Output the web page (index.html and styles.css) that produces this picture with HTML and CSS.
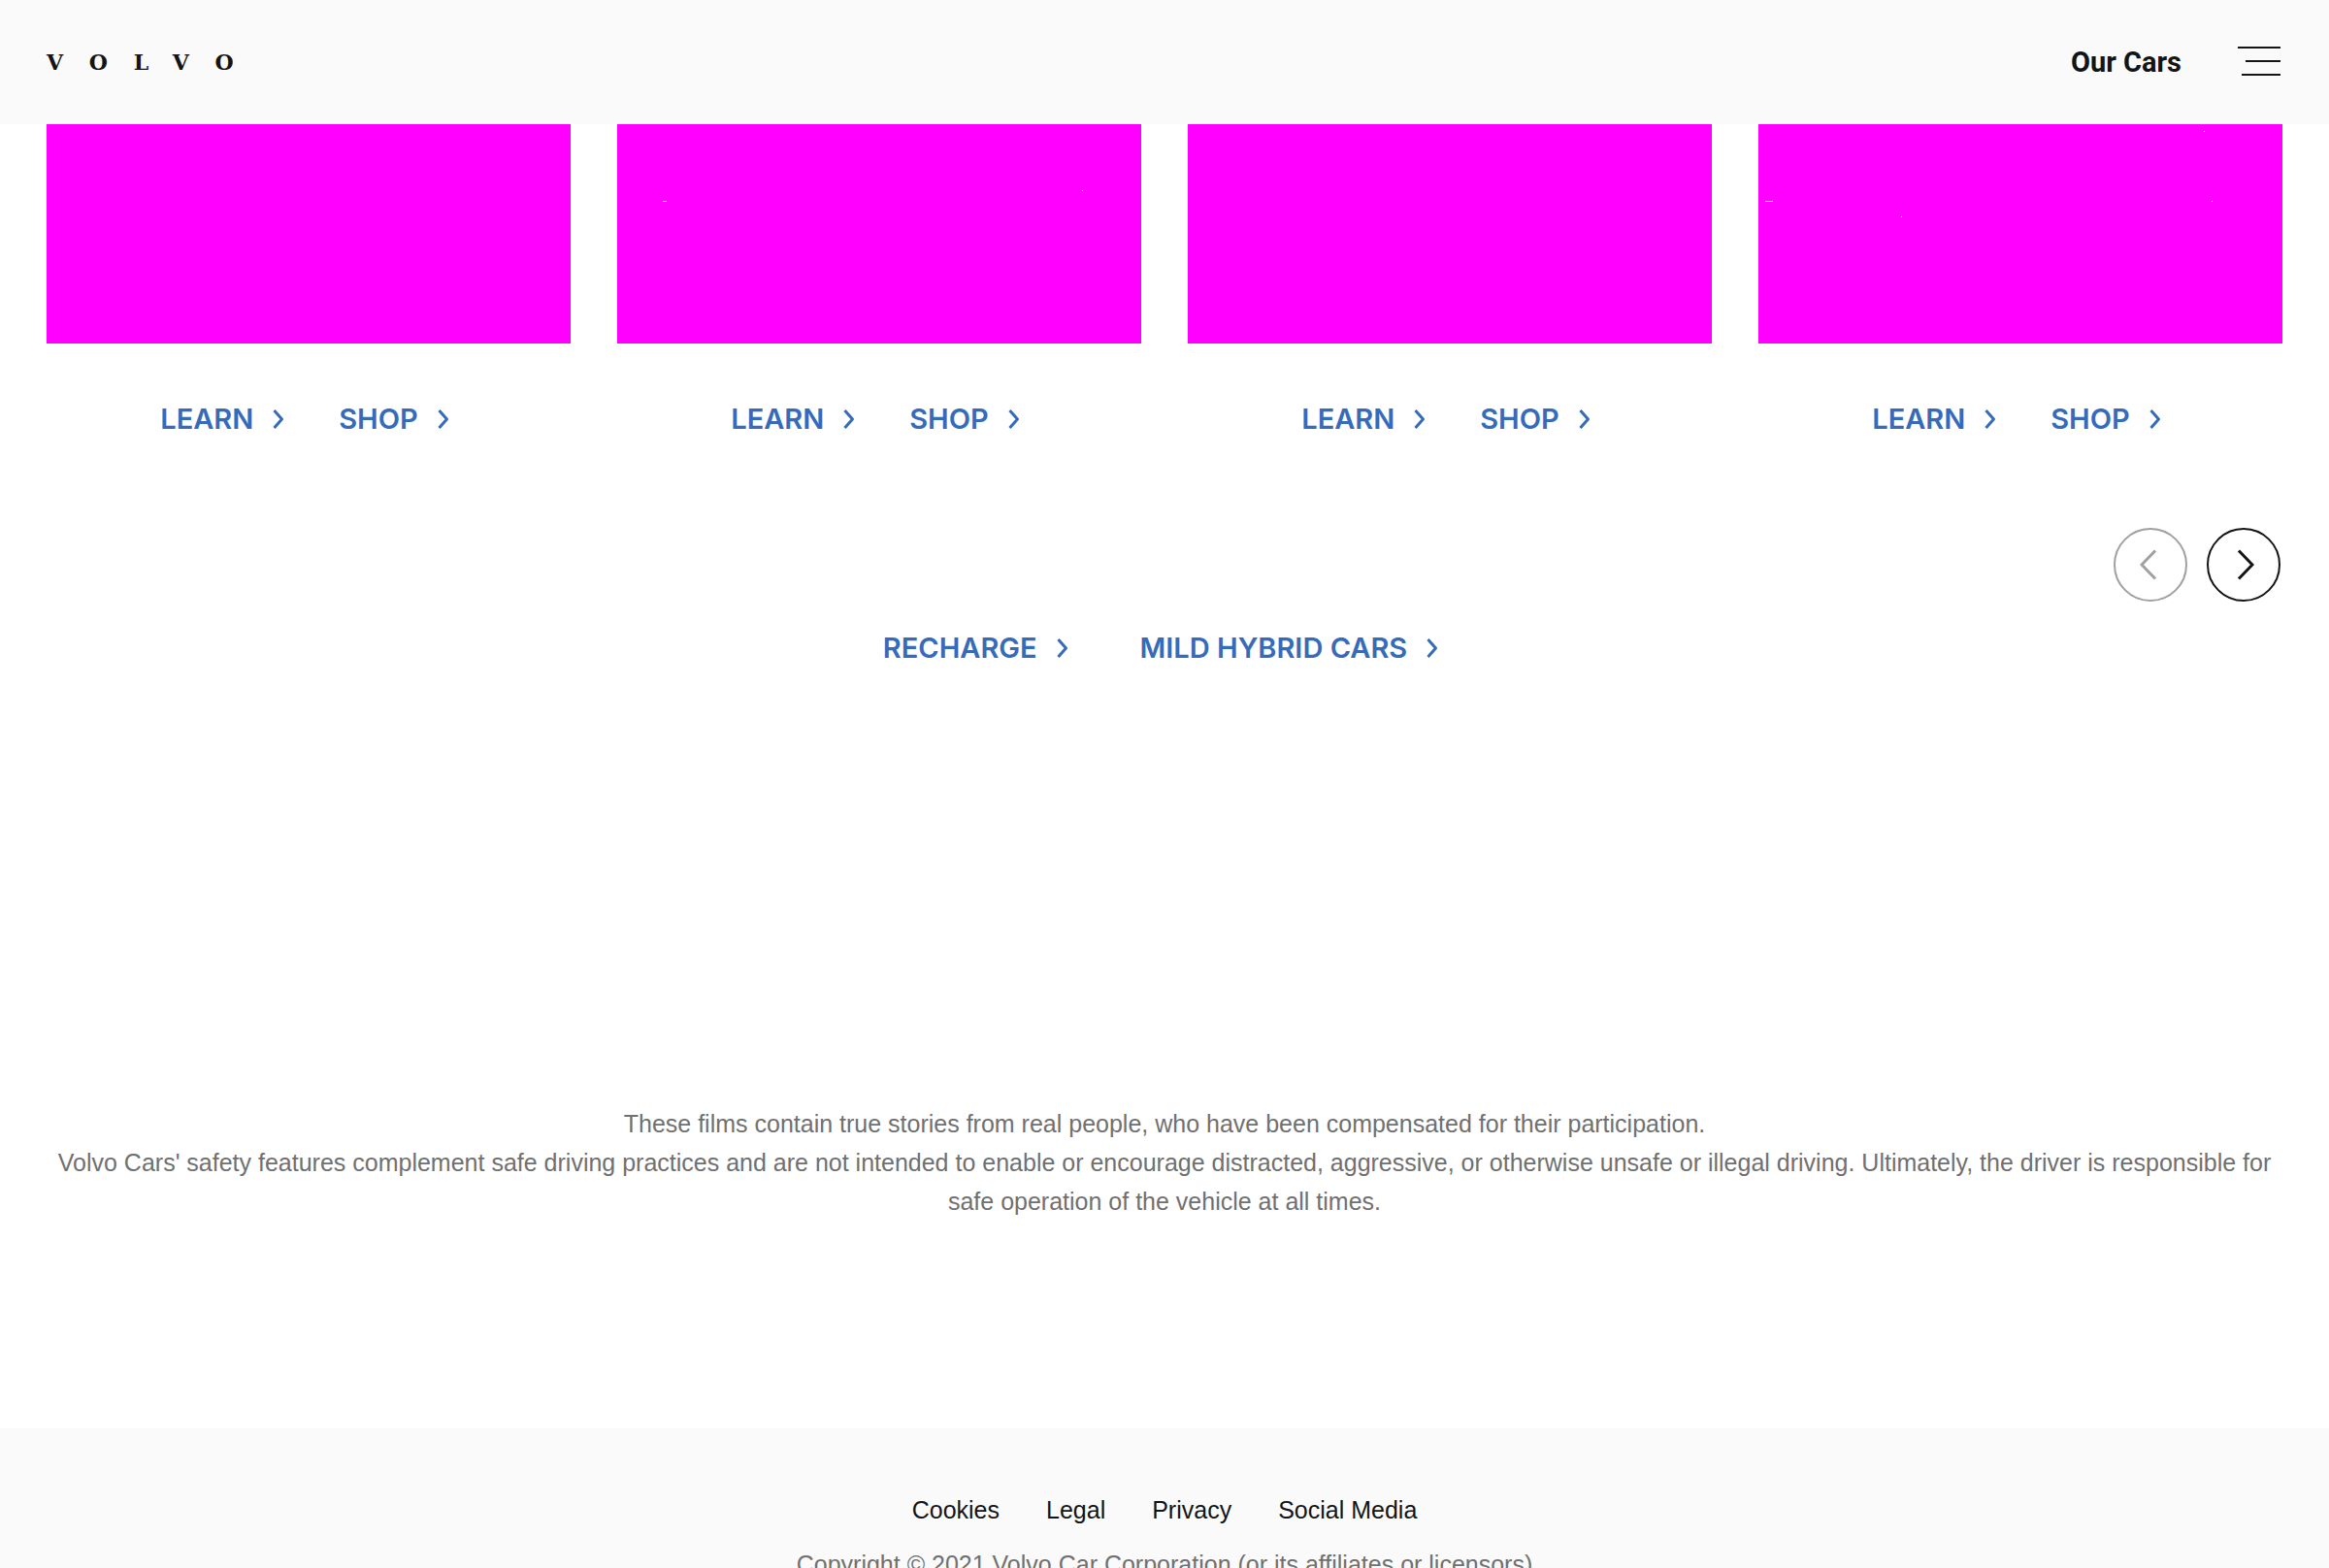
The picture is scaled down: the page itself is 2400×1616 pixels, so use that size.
FILE: index.html
```html
<!DOCTYPE html>
<html lang="en">
<head>
<meta charset="utf-8">
<meta name="viewport" content="width=device-width, initial-scale=1">
<title>Volvo Cars</title>
<link rel="stylesheet" href="styles.css">
</head>
<body>
<svg class="sprite" aria-hidden="true">
  <symbol id="chevron" viewBox="0 0 20 20"><path d="M1.500 1 9.500 10l-8 9" fill="none" stroke="currentColor" stroke-width="3" stroke-linejoin="round"/></symbol>
</svg>

<header class="header">
  <a class="logo" href="#" aria-label="Volvo">VOLVO</a>
  <nav class="header-nav" aria-label="Main">
    <button class="cars-button" type="button">Our Cars</button>
    <button class="menu-button" type="button" aria-label="Menu">
      <svg width="44" height="32" viewBox="0 0 44 32" aria-hidden="true"><path d="M0 1h44M8 15h36M4 29h40" stroke="#141414" stroke-width="2"/></svg>
    </button>
  </nav>
</header>

<main>
  <section class="cars" aria-label="Our cars">
    <article class="car">
      <div class="car-image"></div>
      <div class="links">
        <a class="link" href="#">LEARN<svg class="chevron"><use href="#chevron"/></svg></a>
        <a class="link" href="#">SHOP<svg class="chevron"><use href="#chevron"/></svg></a>
      </div>
    </article>
    <article class="car">
      <div class="car-image"><svg class="specks" aria-hidden="true"><path d="M47 79.500h4M479 68.500h1" stroke="#fff"/></svg></div>
      <div class="links">
        <a class="link" href="#">LEARN<svg class="chevron"><use href="#chevron"/></svg></a>
        <a class="link" href="#">SHOP<svg class="chevron"><use href="#chevron"/></svg></a>
      </div>
    </article>
    <article class="car">
      <div class="car-image"></div>
      <div class="links">
        <a class="link" href="#">LEARN<svg class="chevron"><use href="#chevron"/></svg></a>
        <a class="link" href="#">SHOP<svg class="chevron"><use href="#chevron"/></svg></a>
      </div>
    </article>
    <article class="car">
      <div class="car-image"><svg class="specks" aria-hidden="true"><path d="M7 79.500h8M147 95.500h1M459 7.500h1M467 79.500h1" stroke="#fff"/></svg></div>
      <div class="links">
        <a class="link" href="#">LEARN<svg class="chevron"><use href="#chevron"/></svg></a>
        <a class="link" href="#">SHOP<svg class="chevron"><use href="#chevron"/></svg></a>
      </div>
    </article>
  </section>

  <div class="pager">
    <button class="pager-button" type="button" aria-label="Previous" disabled><svg width="22" height="32" viewBox="0 0 22 32"><path d="M16 1.500 2 16l14 14.500" fill="none" stroke="currentColor" stroke-width="3"/></svg></button>
    <button class="pager-button" type="button" aria-label="Next"><svg width="22" height="32" viewBox="0 0 22 32"><path d="M6 1.500 20 16 6 30.500" fill="none" stroke="currentColor" stroke-width="3"/></svg></button>
  </div>

  <div class="links ranges">
    <a class="link" href="#">RECHARGE<svg class="chevron"><use href="#chevron"/></svg></a>
    <a class="link" href="#">MILD HYBRID CARS<svg class="chevron"><use href="#chevron"/></svg></a>
  </div>

  <div class="disclaimer">
    <p>These films contain true stories from real people, who have been compensated for their participation.</p>
    <p>Volvo Cars' safety features complement safe driving practices and are not intended to enable or encourage distracted, aggressive, or otherwise unsafe or illegal driving. Ultimately, the driver is responsible for safe operation of the vehicle at all times.</p>
  </div>
</main>

<footer class="footer">
  <nav class="footer-nav" aria-label="Footer">
    <a href="#">Cookies</a>
    <a href="#">Legal</a>
    <a href="#">Privacy</a>
    <a href="#">Social Media</a>
  </nav>
  <p class="copyright">Copyright © 2021 Volvo Car Corporation (or its affiliates or licensors)</p>
</footer>
</body>
</html>
```
FILE: styles.css
```css
* {
  box-sizing: border-box;
}

body {
  margin: 0;
  background: #fff;
  color: #141414;
  font: 25px/40px "Liberation Sans", Arial, sans-serif;
  overflow-x: hidden;
}

p {
  margin: 0;
}

a {
  color: inherit;
  text-decoration: none;
}

button {
  padding: 0;
  border: 0;
  background: none;
  color: inherit;
  cursor: pointer;
}

svg {
  display: block;
}

.sprite {
  display: none;
}

.header {
  display: flex;
  align-items: center;
  justify-content: space-between;
  height: 128px;
  padding: 0 50px 0 48px;
  background: #fafafa;
}

.logo {
  font: bold 22px/32px "DejaVu Serif", serif;
  letter-spacing: 27px;
}

.header-nav {
  display: flex;
  align-items: center;
  gap: 58px;
}

.cars-button {
  font: bold 29px/40px Roboto, sans-serif;
}

.cars {
  display: grid;
  grid-template-columns: repeat(4, 1fr);
  gap: 48px;
  padding: 0 48px;
}

.car-image {
  height: 226px;
  background: #f0f;
}

.specks {
  width: 100%;
  height: 100%;
}

.links {
  display: flex;
  justify-content: center;
  gap: 48px;
}

.car .links {
  padding: 58px 0 92px;
}

.link {
  display: flex;
  align-items: center;
  gap: 20px;
  color: #356bb8;
  font: 600 29px/40px Inter, sans-serif;
}

.chevron {
  width: 20px;
  height: 20px;
}

.pager {
  display: flex;
  justify-content: flex-end;
  gap: 20px;
  padding: 0 50px;
}

.pager-button {
  display: grid;
  place-items: center;
  width: 76px;
  height: 76px;
  border: 2px solid;
  border-radius: 50%;
  color: #141414;
}

.pager-button:disabled {
  color: #a0a0a0;
}

.ranges {
  gap: 66px;
  padding-top: 28px;
}

.disclaimer {
  padding: 450px 48px 214px;
  color: #707070;
  text-align: center;
}

.footer {
  padding: 64px 48px;
  background: #fafafa;
  text-align: center;
}

.footer-nav {
  display: flex;
  justify-content: center;
  gap: 48px;
}

.copyright {
  padding-top: 16px;
  color: #707070;
}
```
